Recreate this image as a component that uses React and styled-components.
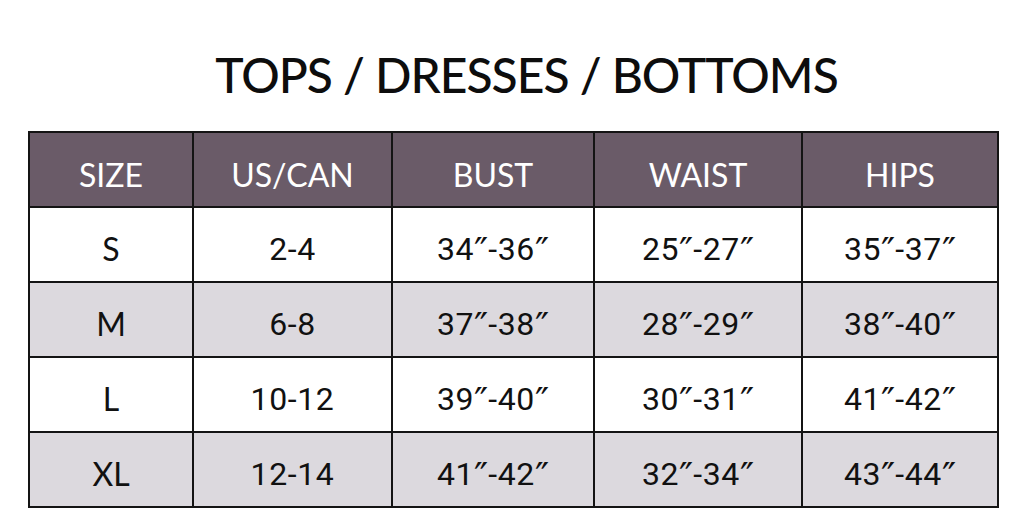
import styled, { createGlobalStyle } from "styled-components";

const GlobalStyle = createGlobalStyle`
  html, body {
    margin: 0;
    padding: 0;
    background: #ffffff;
  }
  body {
    font-family: "Lato", "Open Sans", sans-serif;
    color: #111111;
  }
`;

const Page = styled.div`
  width: 1024px;
  height: 515px;
  padding: 0 0 0 28px;
  box-sizing: border-box;
  overflow: hidden;
`;

const Title = styled.h1`
  margin: 0;
  height: 131px;
  padding: 51px 0 0 26px;
  box-sizing: border-box;
  width: 971px;
  text-align: center;
  font-family: "Lato", sans-serif;
  font-weight: 500;
  font-size: 48px;
  line-height: 1;
  letter-spacing: -1px;
  color: #0d0d0d;
`;

const Grid = styled.div`
  display: grid;
  grid-template-columns: 162px 197px 200px 206px 194px;
  grid-auto-rows: 73px;
  gap: 2px;
  width: max-content;
  background: #141414;
  border: 2px solid #141414;
`;

const Cell = styled.div`
  display: flex;
  align-items: center;
  justify-content: center;
  padding-top: ${(p) => (p.$head ? "10px" : "8px")};
  box-sizing: border-box;
  background: ${(p) => (p.$head ? "#6a5b68" : p.$shade ? "#dcd9de" : "#ffffff")};
  color: ${(p) => (p.$head ? "#ffffff" : "#111111")};
  font-family: ${(p) => (p.$num ? '"Roboto", sans-serif' : '"Lato", sans-serif')};
  font-size: 32px;
  font-weight: 400;
  letter-spacing: ${(p) => (p.$num ? "0.6px" : "0")};
`;

const Prime = styled.span`
  font-family: "DejaVu Sans", sans-serif;
  font-size: 38px;
  line-height: 1;
  letter-spacing: 0;
  position: relative;
  top: 2px;
`;

const headers = ["SIZE", "US/CAN", "BUST", "WAIST", "HIPS"];

const rows = [
  ["S", "2-4", "34″-36″", "25″-27″", "35″-37″"],
  ["M", "6-8", "37″-38″", "28″-29″", "38″-40″"],
  ["L", "10-12", "39″-40″", "30″-31″", "41″-42″"],
  ["XL", "12-14", "41″-42″", "32″-34″", "43″-44″"],
];

const withPrimes = (v) =>
  v.split(/(″)/).map((part, k) =>
    part === "″" ? <Prime key={k}>″</Prime> : part
  );

export default function App() {
  return (
    <>
      <GlobalStyle />
      <Page>
        <Title>TOPS / DRESSES / BOTTOMS</Title>
        <Grid>
          {headers.map((h) => (
            <Cell key={h} $head>
              {h}
            </Cell>
          ))}
          {rows.map((row, i) =>
            row.map((v, j) => (
              <Cell key={`${i}-${j}`} $shade={i % 2 === 1} $num={j > 0}>
                {withPrimes(v)}
              </Cell>
            ))
          )}
        </Grid>
      </Page>
    </>
  );
}
